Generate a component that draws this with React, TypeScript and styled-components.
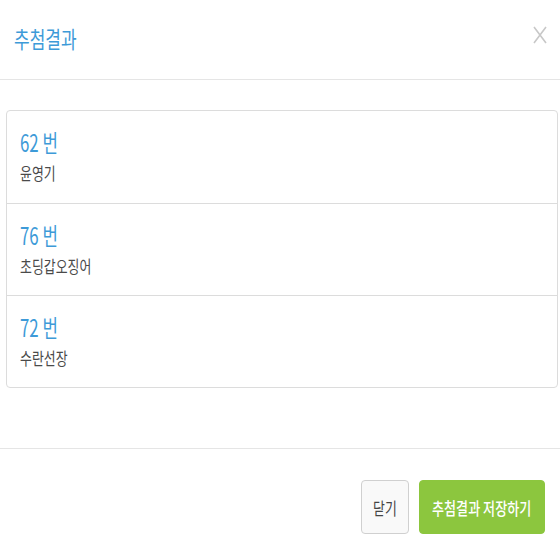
import React from "react";
import styled, { createGlobalStyle } from "styled-components";

const Global = createGlobalStyle`
  html, body { margin: 0; padding: 0; background: #fff; }
  body { font-family: "Noto Sans CJK KR", "Noto Sans", sans-serif; }
`;

const Modal = styled.div`
  width: 560px;
  height: 560px;
  display: flex;
  flex-direction: column;
  background: #fff;
`;

const Header = styled.div`
  height: 80px;
  box-sizing: border-box;
  border-bottom: 1px solid #e5e5e5;
  display: flex;
  align-items: center;
  justify-content: space-between;
  padding: 0 12px 0 14px;
`;

const Narrow = styled.span<{ $scale: number }>`
  display: inline-block;
  transform: scaleX(${(p) => p.$scale});
  transform-origin: left center;
  white-space: nowrap;
`;

const Title = styled.h4`
  margin: 0;
  font-size: 23px;
  font-weight: 400;
  color: #3d9ad8;
  line-height: 1;
  padding-bottom: 2px;
`;

const CloseX = styled.div`
  width: 16px;
  height: 18px;
  margin-bottom: 12px;
`;

const Body = styled.div`
  flex: 1;
  padding: 30px 2px 0 6px;
  border-bottom: 1px solid #e5e5e5;
`;

const List = styled.div`
  border: 1px solid #dcdcdc;
  border-radius: 4px;
  display: flex;
  flex-direction: column;
`;

const Item = styled.div`
  height: 92px;
  box-sizing: border-box;
  padding: 16px 14px 0 13px;
  & + & { border-top: 1px solid #dcdcdc; }
`;

const Num = styled.div`
  font-size: 24px;
  line-height: 30px;
  color: #3d9ad8;
`;

const Name = styled.div`
  margin-top: 5px;
  font-size: 17px;
  line-height: 22px;
  color: #4a4a4a;
`;

const Footer = styled.div`
  height: 111px;
  box-sizing: border-box;
  display: flex;
  justify-content: flex-end;
  align-items: flex-start;
  padding: 31px 15px 0 0;
  gap: 10px;
`;

const Button = styled.button<{ $primary?: boolean }>`
  height: 54px;
  box-sizing: border-box;
  border-radius: 4px;
  font-family: inherit;
  font-size: 17px;
  font-weight: ${(p) => (p.$primary ? 500 : 400)};
  padding: 0;
  display: flex;
  align-items: center;
  justify-content: flex-start;
  border: 1px solid ${(p) => (p.$primary ? "#8cc63e" : "#d0d0d0")};
  background: ${(p) => (p.$primary ? "#8cc63e" : "#f9f9f9")};
  color: ${(p) => (p.$primary ? "#fff" : "#444")};
`;

const CloseBtn = styled(Button)`
  width: 48px;
  padding-left: 11px;
`;

const SaveBtn = styled(Button)`
  width: 126px;
  padding-left: 12px;
`;

const items = [
  { n: 62, name: "윤영기" },
  { n: 76, name: "초딩갑오징어" },
  { n: 72, name: "수란선장" },
];

export default function App() {
  return (
    <Modal>
      <Global />
      <Header>
        <Title>
          <Narrow $scale={0.74}>추첨결과</Narrow>
        </Title>
        <CloseX>
          <svg width="16" height="18" viewBox="0 0 16 18">
            <path d="M2 1 L14 17 M14 1 L2 17" stroke="#c8c8c8" strokeWidth="1.6" fill="none" />
          </svg>
        </CloseX>
      </Header>
      <Body>
        <List>
          {items.map((it) => (
            <Item key={it.n}>
              <Num>
                <Narrow $scale={0.7}>{it.n} 번</Narrow>
              </Num>
              <Name>
                <Narrow $scale={0.76}>{it.name}</Narrow>
              </Name>
            </Item>
          ))}
        </List>
      </Body>
      <Footer>
        <CloseBtn>
          <Narrow $scale={0.76}>닫기</Narrow>
        </CloseBtn>
        <SaveBtn $primary>
          <Narrow $scale={0.77}>추첨결과 저장하기</Narrow>
        </SaveBtn>
      </Footer>
    </Modal>
  );
}
